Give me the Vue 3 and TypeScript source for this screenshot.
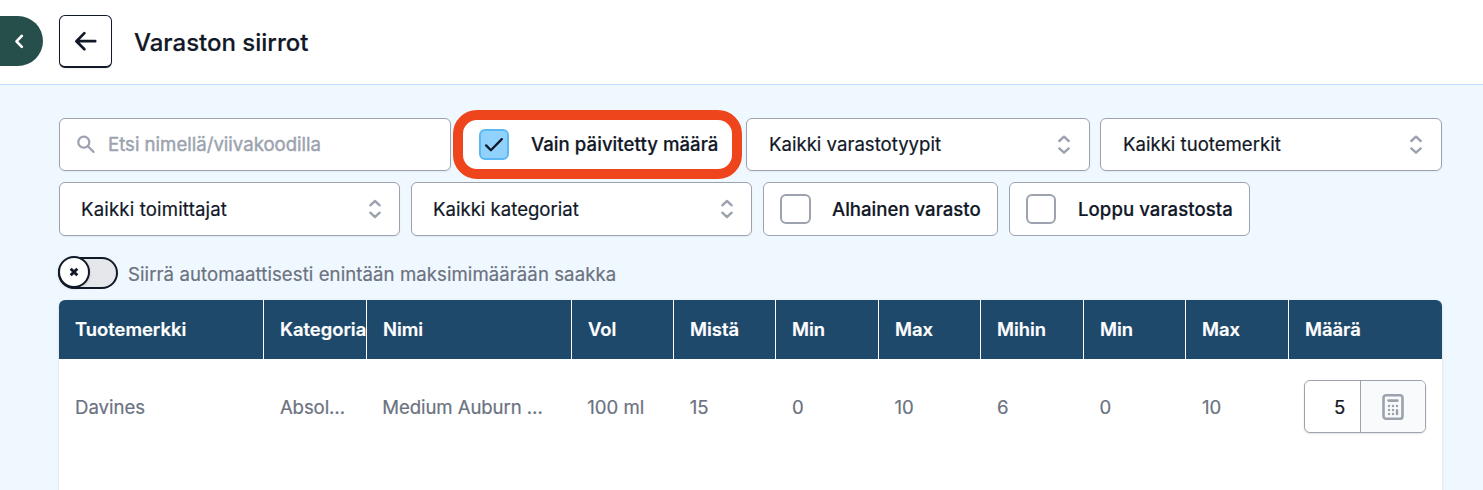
<script setup lang="ts">
interface Column {
  label: string
  value: string
  key: string
}

const columns: Column[] = [
  { key: 'brand', label: 'Tuotemerkki', value: 'Davines' },
  { key: 'category', label: 'Kategoria', value: 'Absol…' },
  { key: 'name', label: 'Nimi', value: 'Medium Auburn …' },
  { key: 'volume', label: 'Vol', value: '100 ml' },
  { key: 'from', label: 'Mistä', value: '15' },
  { key: 'from-min', label: 'Min', value: '0' },
  { key: 'from-max', label: 'Max', value: '10' },
  { key: 'to', label: 'Mihin', value: '6' },
  { key: 'to-min', label: 'Min', value: '0' },
  { key: 'to-max', label: 'Max', value: '10' },
]
</script>

<template>
  <div class="page">
    <header class="topbar">
      <button class="drawer" aria-label="Valikko">
        <svg width="12" height="16" viewBox="0 0 12 16"><path d="M9.8 2.9 4.5 8.4l5.3 5.5" /></svg>
      </button>
      <button class="back" aria-label="Takaisin">
        <svg width="24" height="22" viewBox="0 0 24 22"><path d="M10.4 3.1 2.4 11.2l8 8.1M2.6 11.2h18.6" /></svg>
      </button>
      <h1>Varaston siirrot</h1>
    </header>

    <main>
      <div class="row first">
        <div class="box search">
          <svg class="lens" width="19" height="19" viewBox="0 0 19 19"><circle cx="6.8" cy="7.2" r="5.5" /><path d="m10.9 11.3 5.6 5.6" /></svg>
          <span>Etsi nimellä/viivakoodilla</span>
        </div>
        <div class="highlight">
          <span class="check checked">
            <svg width="20" height="16" viewBox="0 0 20 16"><path d="m2.1 8.4 4.8 4.8L17.8 2.1" /></svg>
          </span>
          <span class="bold">Vain päivitetty määrä</span>
        </div>
        <div class="box select types">
          <span>Kaikki varastotyypit</span>
          <svg class="sort" width="14" height="20" viewBox="0 0 14 20"><path d="M2.3 6 7 1.7 11.7 6M2.3 13.4 7 17.7l4.7-4.3" /></svg>
        </div>
        <div class="box select brands">
          <span>Kaikki tuotemerkit</span>
          <svg class="sort" width="14" height="20" viewBox="0 0 14 20"><path d="M2.3 6 7 1.7 11.7 6M2.3 13.4 7 17.7l4.7-4.3" /></svg>
        </div>
      </div>

      <div class="row second">
        <div class="box select suppliers">
          <span class="wide">Kaikki toimittajat</span>
          <svg class="sort" width="14" height="20" viewBox="0 0 14 20"><path d="M2.3 6.3 7 2l4.7 4.3M2.3 13.7 7 18l4.7-4.3" /></svg>
        </div>
        <div class="box select suppliers">
          <span>Kaikki kategoriat</span>
          <svg class="sort" width="14" height="20" viewBox="0 0 14 20"><path d="M2.3 6.3 7 2l4.7 4.3M2.3 13.7 7 18l4.7-4.3" /></svg>
        </div>
        <div class="box tick low"><span class="check" /><span class="bold">Alhainen varasto</span></div>
        <div class="box tick out"><span class="check" /><span class="bold">Loppu varastosta</span></div>
      </div>

      <div class="auto">
        <div class="switch">
          <span class="knob">
            <svg width="10" height="10" viewBox="0 0 10 10"><path d="m1.7 1.7 6.6 6.6M8.3 1.7 1.7 8.3" /></svg>
          </span>
        </div>
        <span class="auto-label">Siirrä automaattisesti enintään maksimimäärään saakka</span>
      </div>

      <section class="table">
        <div class="grid head">
          <div v-for="c in columns" :key="c.key" class="cell">{{ c.label }}</div>
          <div class="cell">Määrä</div>
        </div>
        <div class="grid body">
          <div v-for="c in columns" :key="c.key" class="cell">{{ c.value }}</div>
          <div class="cell">
            <div class="amount">
              <span class="num">5</span>
              <span class="calc">
                <svg width="24" height="28" viewBox="0 0 24 28">
                  <rect x="2.5" y="2.2" width="19" height="23.6" rx="2.6" />
                  <path class="bar" d="M7.6 7.6h8.8" />
                  <path class="dots" d="M8 13h0M12 13h0M16 13h0M8 17h0M12 17h0M8 21h0M12 21h0M16 17.2v3.7" />
                </svg>
              </span>
            </div>
          </div>
        </div>
      </section>
    </main>
  </div>
</template>

<style>
body {
  margin: 0;
  overflow: hidden;
}
</style>

<style scoped>
.page {
  box-sizing: border-box;
  width: 1483px;
  height: 490px;
  overflow: hidden;
  background: #f0f8ff;
  font-family: Inter, "Liberation Sans", sans-serif;
  font-size: 18.6px;
  line-height: 26px;
  color: #111827;
  white-space: nowrap;
  -webkit-text-stroke: 0.2px currentColor;
}
.page * {
  box-sizing: border-box;
}
svg {
  display: block;
  flex: none;
  fill: none;
  stroke: currentColor;
  stroke-linecap: round;
  stroke-linejoin: round;
}
button {
  padding: 0;
  font: inherit;
}
.topbar {
  display: flex;
  align-items: flex-start;
  height: 85px;
  background: #fff;
  border-bottom: 1px solid #bfdbfe;
}
.drawer {
  display: flex;
  align-items: center;
  width: 43px;
  height: 50px;
  margin-top: 16px;
  padding-left: 12px;
  border: 0;
  border-radius: 0 25px 25px 0;
  background: #264f4c;
  color: #fff;
}
.drawer svg {
  stroke-width: 2.7;
}
.back {
  display: flex;
  align-items: center;
  justify-content: center;
  width: 53px;
  height: 53px;
  margin: 15px 0 0 16px;
  border: 1px solid #111827;
  border-bottom-width: 2px;
  border-radius: 6px;
  background: #fff;
  color: #111827;
  box-shadow: 0 1px 2px rgba(0, 0, 0, 0.08);
}
.back svg {
  stroke-width: 2.7;
}
h1 {
  margin: 27px 0 0 22px;
  font-size: 24px;
  line-height: 32px;
  font-weight: 500;
}
main {
  padding: 33px 41px 0 59px;
}
.row {
  display: flex;
}
.box {
  display: flex;
  align-items: center;
  height: 54px;
  border: 1px solid #9ca3af;
  border-radius: 6px;
  background: #fff;
  box-shadow: 0 1px 2px rgba(0, 0, 0, 0.06);
}
.first .box {
  height: 53px;
}
.first span:not(.check) {
  padding-bottom: 2px;
}
.search {
  width: 392px;
  padding-left: 17px;
  color: #9ca3af;
}
.search span {
  margin-left: 12px;
  -webkit-text-stroke-width: 0.45px;
}
.lens {
  stroke-width: 2.2;
}
.highlight {
  display: flex;
  align-items: center;
  width: 289px;
  height: 69px;
  margin: -8px 4px -8px 2px;
  padding-left: 16px;
  border: 10px solid #ef451d;
  border-radius: 24px;
  background: #fff;
}
.check {
  display: flex;
  align-items: center;
  justify-content: center;
  flex: none;
  width: 31px;
  height: 30px;
  border: 2px solid #9ca3af;
  border-radius: 6px;
}
.checked {
  width: 30px;
  height: 31px;
  border-color: #5bb8f5;
  background: #90d2fb;
}
.checked svg {
  stroke-width: 2.3;
}
.bold {
  margin-left: 21px;
  font-weight: 500;
  letter-spacing: 0.05px;
}
.highlight .bold {
  margin-left: 22px;
}
.select {
  justify-content: space-between;
  padding: 0 17px 0 21px;
}
.types {
  width: 344px;
  padding-left: 22px;
  padding-right: 18px;
}
.brands {
  width: 342px;
  margin-left: 10px;
}
.brands.select {
  padding-left: 22px;
  padding-right: 18px;
}
.wide {
  letter-spacing: 0.16px;
}
.sort {
  color: #9ca3af;
  stroke-width: 2.4;
}
.second {
  gap: 11px;
  margin-top: 11px;
}
.suppliers {
  width: 341px;
}
.tick {
  padding-left: 16px;
  box-shadow: none;
}
.low {
  width: 235px;
}
.low .bold {
  letter-spacing: 0;
}
.out {
  width: 241px;
}
.out .check {
  width: 30px;
}
.out .bold {
  margin-left: 22px;
}
.auto {
  display: flex;
  height: 32px;
  margin-top: 21px;
}
.switch {
  width: 60px;
  height: 32px;
  margin-left: -1px;
  border: 2px solid #111827;
  border-radius: 16px;
  background: #e5e7eb;
}
.knob {
  display: flex;
  align-items: center;
  justify-content: center;
  width: 32px;
  height: 32px;
  margin: -3px 0 0 -2px;
  border: 2px solid #111827;
  border-radius: 50%;
  background: #fff;
  box-shadow: 0 1px 3px rgba(0, 0, 0, 0.15);
}
.knob svg {
  stroke-width: 2.9;
  stroke-linecap: butt;
}
.auto-label {
  margin: 4px 0 0 10px;
  color: #6b7280;
  letter-spacing: 0.07px;
}
.table {
  height: 240px;
  margin-top: 11px;
  border-radius: 6px;
  background: #fff;
  box-shadow: 0 1px 3px rgba(0, 0, 0, 0.12);
}
.grid {
  display: grid;
  grid-template-columns: 2fr 1fr 2fr repeat(7, 1fr) 1.5fr;
}
.cell {
  min-width: 0;
  padding-left: 16px;
}
.head {
  grid-template-columns: 205px 103px 205px 102px 102px 103px 102px 103px 102px 103px 1fr;
  height: 59px;
  overflow: hidden;
  border-radius: 6px 6px 0 0;
  background: #1e496b;
  color: #fff;
  font-size: 18.4px;
  font-weight: 600;
  line-height: 58px;
}
.head .cell {
  overflow: hidden;
  border-right: 1px solid #fff;
}
.head .cell:last-child {
  border-right: 0;
}
.body {
  color: #6b7280;
  line-height: 96px;
}
.body .cell:nth-child(2),
.body .cell:nth-child(3) {
  letter-spacing: -0.1px;
}
.amount {
  display: flex;
  width: 122px;
  height: 53px;
  margin-top: 21px;
  overflow: hidden;
  border: 1px solid #9ca3af;
  border-radius: 6px;
  background: #fff;
  line-height: 53px;
  box-shadow: 0 1px 2px rgba(0, 0, 0, 0.12);
}
.num {
  width: 56px;
  padding-right: 15px;
  border-right: 1px solid #9ca3af;
  color: #111827;
  text-align: right;
}
.calc {
  display: flex;
  flex: 1;
  align-items: center;
  justify-content: center;
  background: #f9fafb;
  color: #9ca3af;
}
.calc svg {
  stroke-width: 2.6;
}
.calc .dots {
  stroke-width: 2.5;
}
</style>
